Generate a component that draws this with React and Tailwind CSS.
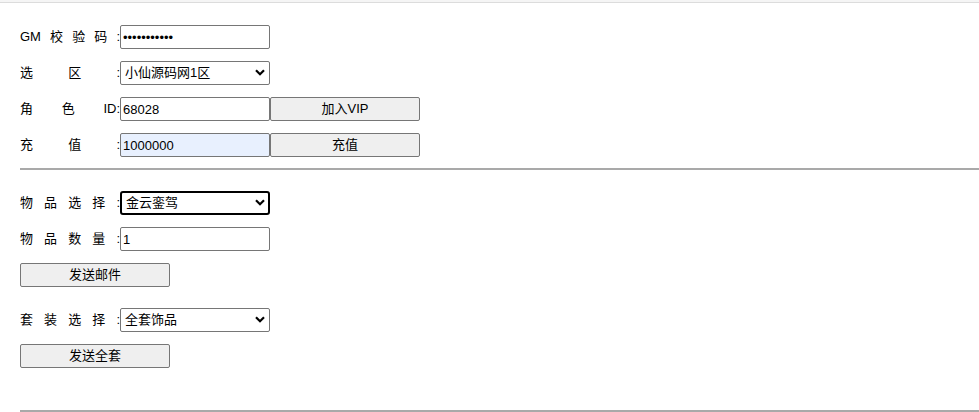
import React from "react";

const font = { fontFamily: '"Liberation Sans", "Noto Sans CJK SC", sans-serif' };

const Label = ({ parts }) => (
  <div className="flex w-[100px] justify-between text-[13px] leading-[24px] text-black">
    {parts.map((p, i) => (
      <span key={i}>{p}</span>
    ))}
  </div>
);

const Chevron = () => (
  <svg
    className="pointer-events-none absolute right-[5px] top-[8px]"
    width="10"
    height="7"
    viewBox="0 0 10 7"
  >
    <path d="M1 1.2 L5 5.2 L9 1.2" fill="none" stroke="#000" strokeWidth="2.2" />
  </svg>
);

const TextBox = ({ value, type = "text", fill }) => (
  <input
    type={type}
    readOnly
    defaultValue={value}
    className={`h-[24px] w-[150px] rounded-[2px] border border-[#767676] px-[2px] text-[13px] text-black outline-none ${
      fill ? "bg-[#e8f0fe]" : "bg-white"
    }`}
  />
);

const SelectBox = ({ value, focused }) => (
  <div className="relative h-[24px] w-[150px]">
    <div
      className={`flex h-full w-full items-center bg-white px-[4px] text-[13px] text-black ${
        focused
          ? "rounded-[3px] border-2 border-black px-[3px]"
          : "rounded-[2px] border border-[#767676]"
      }`}
    >
      {value}
    </div>
    <Chevron />
  </div>
);

const Btn = ({ children }) => (
  <button className="h-[24px] w-[150px] rounded-[2px] border border-[#767676] bg-[#efefef] text-[13px] text-black">
    {children}
  </button>
);

const Row = ({ children, className = "" }) => (
  <div className={`flex h-[24px] items-center ${className}`}>{children}</div>
);

export default function App() {
  return (
    <div className="min-h-[412px] w-[979px] bg-white" style={font}>
      <div className="h-[3px] border-b border-[#dcdcdc] bg-[#f5f5f5]" />
      <div className="pl-[20px]">
        <Row className="mt-[22px]">
          <Label parts={["GM", "校", "验", "码", ":"]} />
          <TextBox type="password" value="12345678901" />
        </Row>
        <Row className="mt-[12px]">
          <Label parts={["选", "区", ":"]} />
          <SelectBox value="小仙源码网1区" />
        </Row>
        <Row className="mt-[12px]">
          <Label parts={["角", "色", "ID:"]} />
          <TextBox value="68028" />
          <Btn>加入VIP</Btn>
        </Row>
        <Row className="mt-[12px]">
          <Label parts={["充", "值", ":"]} />
          <TextBox value="1000000" fill />
          <Btn>充值</Btn>
        </Row>

        <hr className="mt-[11px] border-t-2 border-[#a9a9a9]" />

        <Row className="mt-[21px]">
          <Label parts={["物", "品", "选", "择", ":"]} />
          <SelectBox value="金云銮驾" focused />
        </Row>
        <Row className="mt-[12px]">
          <Label parts={["物", "品", "数", "量", ":"]} />
          <TextBox value="1" />
        </Row>
        <Row className="mt-[12px]">
          <Btn>发送邮件</Btn>
        </Row>

        <Row className="mt-[21px]">
          <Label parts={["套", "装", "选", "择", ":"]} />
          <SelectBox value="全套饰品" />
        </Row>
        <Row className="mt-[12px]">
          <Btn>发送全套</Btn>
        </Row>

        <hr className="mt-[42px] border-t-2 border-[#a9a9a9]" />
      </div>
    </div>
  );
}
